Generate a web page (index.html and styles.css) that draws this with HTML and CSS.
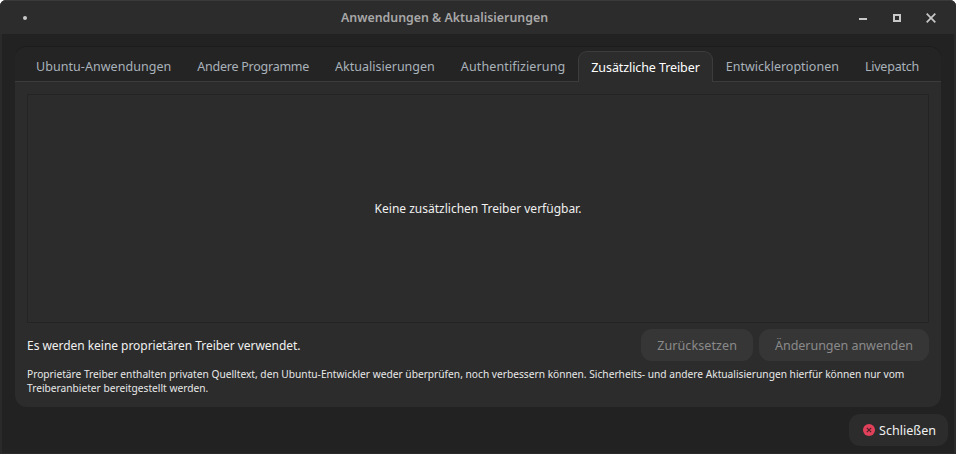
FILE: index.html
```
<!DOCTYPE html>
<html lang="de">
<head>
<meta charset="utf-8">
<title>Anwendungen &amp; Aktualisierungen</title>
<link rel="stylesheet" href="styles.css">
</head>
<body>
<div class="window">
  <header class="titlebar">
    <span class="app-dot"></span>
    <span class="title">Anwendungen &amp; Aktualisierungen</span>
    <div class="controls">
      <svg class="ctl" width="8" height="2" viewBox="0 0 8 2"><rect width="8" height="2" fill="#c8c8c8"/></svg>
      <svg class="ctl" width="8" height="8" viewBox="0 0 8 8"><rect x="1" y="1" width="6" height="6" fill="none" stroke="#c8c8c8" stroke-width="2"/></svg>
      <svg class="ctl" width="10" height="10" viewBox="0 0 10 10"><path d="M.7.7 9.3 9.3M9.3.7.7 9.3" fill="none" stroke="#c8c8c8" stroke-width="1.7"/></svg>
    </div>
  </header>
  <main class="content">
    <section class="notebook">
      <nav class="tabs">
        <span class="tab t1">Ubuntu-Anwendungen</span>
        <span class="tab t2">Andere Programme</span>
        <span class="tab">Aktualisierungen</span>
        <span class="tab t4">Authentifizierung</span>
        <span class="tab active">Zusätzliche Treiber</span>
        <span class="tab">Entwickleroptionen</span>
        <span class="tab t7">Livepatch</span>
      </nav>
      <div class="page">
        <div class="driver-frame">Keine zusätzlichen Treiber verfügbar.</div>
        <div class="status-row">
          <span class="status">Es werden keine proprietären Treiber verwendet.</span>
          <button class="btn reset" disabled>Zurücksetzen</button>
          <button class="btn apply" disabled>Änderungen anwenden</button>
        </div>
        <p class="note">Proprietäre Treiber enthalten privaten Quelltext, den Ubuntu-Entwickler weder überprüfen, noch verbessern können. Sicherheits- und andere Aktualisierungen hierfür können nur vom Treiberanbieter bereitgestellt werden.</p>
      </div>
    </section>
    <div class="actions">
      <button class="close-btn">
        <svg width="12" height="12" viewBox="0 0 12 12"><circle cx="6" cy="6" r="6" fill="#e0405a"/><path d="M3.8 3.8 8.2 8.2M8.2 3.8 3.8 8.2" stroke="#4a2028" stroke-width="1.2"/></svg>
        Schließen
      </button>
    </div>
  </main>
</div>
</body>
</html>
```
FILE: styles.css
```
html, body { margin: 0; padding: 0; background: #fff; }
body { width: 956px; height: 454px; overflow: hidden; font-family: "Noto Sans", sans-serif; font-size: 12px; }
.window { width: 956px; height: 454px; background: #222222; border-radius: 6px 6px 0 0; display: flex; flex-direction: column; color: #f0f0f0; box-sizing: border-box; border-left: 2px solid #2a2a2a; border-right: 2px solid #2a2a2a; border-bottom: 1px solid #2a2a2a; }
.titlebar { height: 34px; margin: 0 -2px; flex: none; background: #2c2c2c; border-top: 1px solid #3a3a3a; border-radius: 6px 6px 0 0; box-sizing: border-box; display: flex; align-items: center; }
.app-dot { width: 4px; height: 4px; border-radius: 50%; background: #c8c8c8; margin-left: 23px; flex: none; }
.title { flex: 1; text-align: center; font-weight: 600; font-size: 12.36px; color: #a8a8a8; padding-left: 3px; padding-bottom: 1px; }
.controls { display: flex; align-items: center; flex: none; }
.ctl { display: block; }
.ctl:nth-child(1) { margin-right: 26px; margin-top: 3px; }
.ctl:nth-child(2) { margin-right: 25px; }
.ctl:nth-child(3) { margin-right: 20px; }
.content { flex: 1; display: flex; flex-direction: column; padding: 13px 6px 7px 13px; min-height: 0; }
.notebook { width: 926px; height: 360px; background: #2c2c2c; border-radius: 12px; display: flex; flex-direction: column; box-shadow: 0 -1px 0 #1c1c1c; }
.tabs { height: 35px; flex: none; background: #242424; border-radius: 12px 12px 0 0; border-bottom: 1px solid #3c3c3c; box-sizing: border-box; display: flex; padding: 4px 0 0 8px; font-size: 12.5px; }
.tab { padding: 0 13px; height: 30px; line-height: 32px; color: #a9b2ba; white-space: nowrap; }
.tab.t1 { letter-spacing: 0.05px; }
.tab.t2 { letter-spacing: -0.25px; }
.tab.t4 { letter-spacing: 0.12px; }
.tab.t7 { letter-spacing: -0.22px; }
.tab.active { color: #ffffff; background: #2c2c2c; border: 1px solid #3c3c3c; border-bottom: 0; border-radius: 9px 9px 0 0; margin-bottom: -1px; padding: 0 12px; letter-spacing: -0.09px; }
.page { flex: 1; display: flex; flex-direction: column; padding: 12px 12px 0; min-height: 0; }
.driver-frame { height: 229px; flex: none; box-sizing: border-box; border: 1px solid #242424; display: flex; align-items: center; justify-content: center; }
.status-row { display: flex; align-items: center; margin-top: 6px; gap: 6px; }
.status { flex: 1; letter-spacing: -0.04px; }
.btn { font: inherit; font-size: 12.55px; height: 32px; border: 0; border-radius: 11px; background: #363636; color: #8a8a8a; padding: 0 16px; }
.btn.reset { letter-spacing: 0.08px; }
.btn.apply { letter-spacing: -0.06px; }
.note { margin: 6px 0 0; font-size: 10.2px; line-height: 14px; color: #e8e8e8; }
.actions { display: flex; justify-content: flex-end; margin-top: 7px; }
.close-btn { font: inherit; font-size: 12.55px; height: 32px; border: 0; border-radius: 11px; background: #2c2c2c; color: #f0f0f0; display: flex; align-items: center; gap: 4px; padding: 0 12px 0 14px; }
```
